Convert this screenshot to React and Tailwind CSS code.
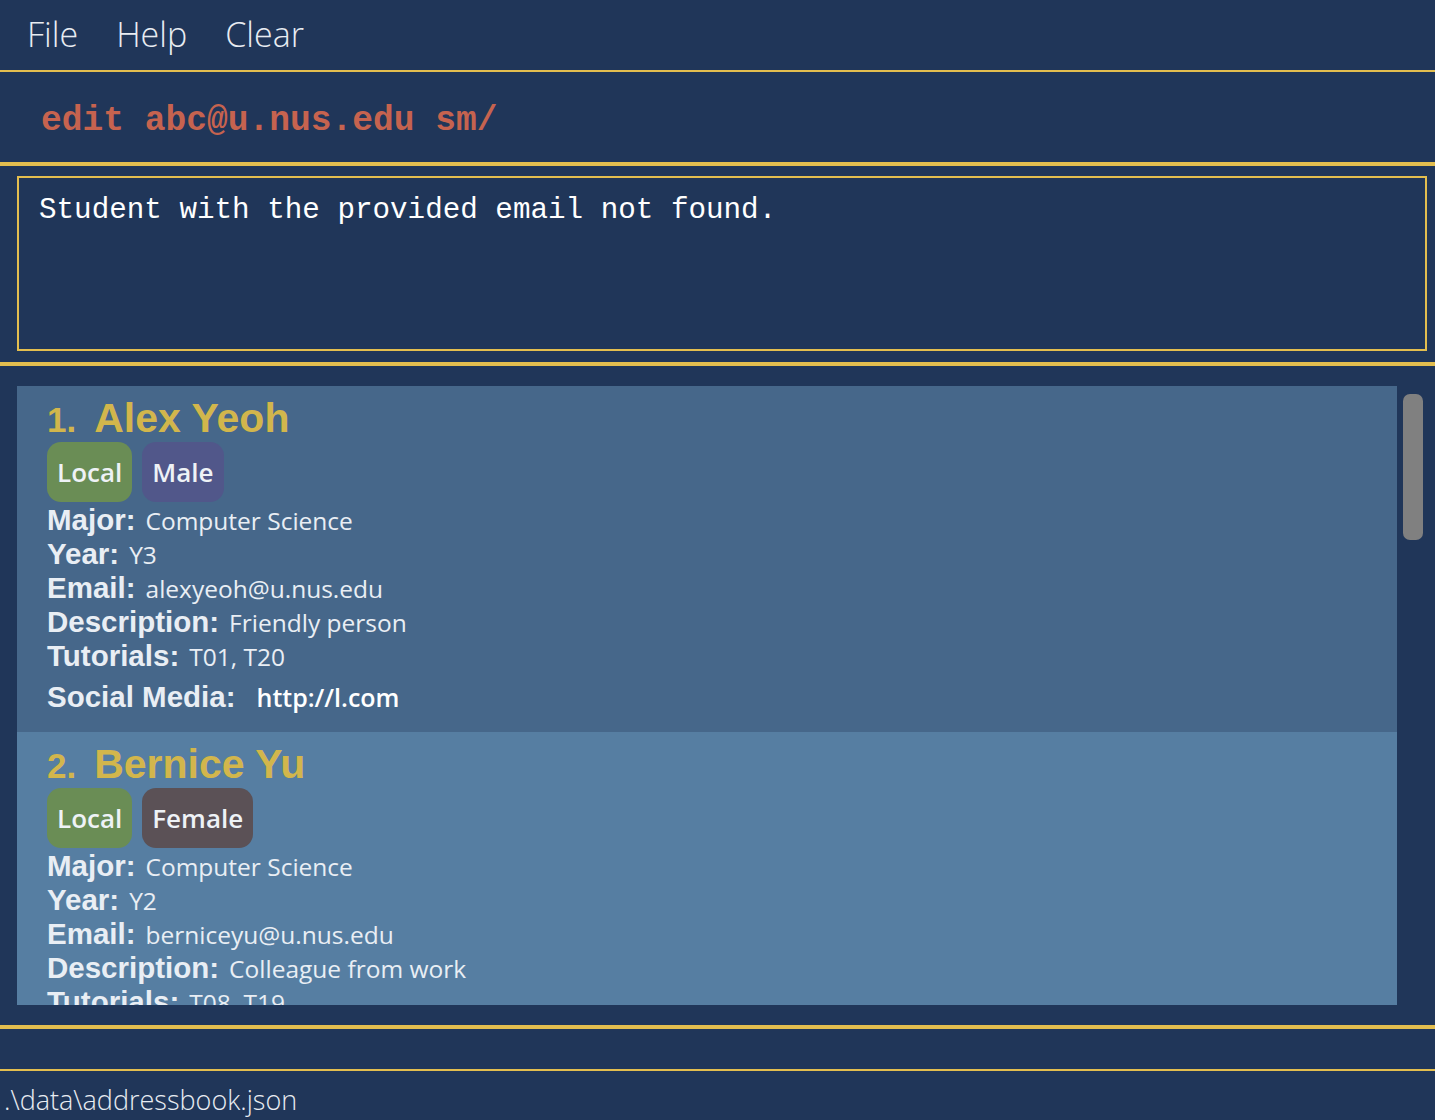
import React from "react";

const sans = { fontFamily: '"Open Sans", "Noto Sans", sans-serif' };
const arial = { fontFamily: '"Liberation Sans", Arial, sans-serif' };
const mono = { fontFamily: '"Liberation Mono", "Courier New", monospace' };

function Tag({ children, color }) {
  return (
    <span
      className={`flex h-[60px] items-center rounded-[14px] px-[10px] text-[26px] font-semibold text-[#eef2f6] ${color}`}
      style={sans}
    >
      {children}
    </span>
  );
}

function Field({ label, value }) {
  return (
    <div className="flex h-[34px] items-baseline leading-none">
      <span className="text-[29.5px] font-bold text-[#e9eef4]" style={arial}>
        {label}
      </span>
      <span className="ml-[10px] text-[24.5px] text-[#e9eef4]" style={sans}>
        {value}
      </span>
    </div>
  );
}

function Card({ idx, name, tags, fields, social, bg }) {
  return (
    <div className={`${bg} h-[346px] shrink-0 overflow-hidden pl-[30px] pt-[12px]`}>
      <div className="flex h-[44px] items-baseline leading-none text-[#d2b64c]" style={arial}>
        <span className="text-[35px] font-bold">{idx}.</span>
        <span className="ml-[18px] text-[41px] font-bold">{name}</span>
      </div>
      <div className="flex gap-[10px]">
        {tags.map((t) => (
          <Tag key={t.label} color={t.color}>
            {t.label}
          </Tag>
        ))}
      </div>
      <div className="mt-[3px] flex flex-col">
        {fields.map((f) => (
          <Field key={f[0]} label={f[0]} value={f[1]} />
        ))}
        {social && (
          <div className="mt-[7px] flex h-[34px] items-baseline leading-none">
            <span className="text-[29.5px] font-bold text-[#e9eef4]" style={arial}>
              Social Media:
            </span>
            <span className="ml-[21px] text-[25px] font-semibold text-white" style={sans}>
              {social}
            </span>
          </div>
        )}
      </div>
    </div>
  );
}

export default function App() {
  return (
    <div className="flex h-[1120px] w-[1435px] flex-col overflow-hidden bg-[#203659]">
      {/* Menu */}
      <div className="flex h-[70px] items-center gap-[38px] pl-[27px] pb-[2px] text-[34px] font-light text-[#e8ecf2]" style={sans}>
        <span>File</span>
        <span>Help</span>
        <span>Clear</span>
      </div>
      <div className="h-[2px] bg-[#e3be4f]" />
      {/* Command box */}
      <div className="flex h-[90px] items-center pl-[41px] pt-[8px]">
        <span className="text-[34.6px] font-bold text-[#c6634f]" style={mono}>
          edit abc@u.nus.edu sm/
        </span>
      </div>
      <div className="h-[4px] bg-[#e3be4f]" />
      {/* Result */}
      <div className="h-[196px] pl-[17px] pr-[8px] pt-[10px] pb-[11px]">
        <div className="h-full border-2 border-[#e3be4f] px-[20px] pt-[11px]">
          <span className="text-[29.25px] text-white" style={mono}>
            Student with the provided email not found.
          </span>
        </div>
      </div>
      <div className="h-[4px] bg-[#e3be4f]" />
      {/* List */}
      <div className="flex h-[659px] pt-[20px] pb-[20px] pl-[17px]">
        <div className="flex w-[1380px] flex-col overflow-hidden">
          <Card
            idx={1}
            name="Alex Yeoh"
            bg="bg-[#46678a]"
            tags={[
              { label: "Local", color: "bg-[#6a8d55]" },
              { label: "Male", color: "bg-[#51578a]" },
            ]}
            fields={[
              ["Major:", "Computer Science"],
              ["Year:", "Y3"],
              ["Email:", "alexyeoh@u.nus.edu"],
              ["Description:", "Friendly person"],
              ["Tutorials:", "T01, T20"],
            ]}
            social="http://l.com"
          />
          <Card
            idx={2}
            name="Bernice Yu"
            bg="bg-[#567ea2]"
            tags={[
              { label: "Local", color: "bg-[#6a8d55]" },
              { label: "Female", color: "bg-[#5b5156]" },
            ]}
            fields={[
              ["Major:", "Computer Science"],
              ["Year:", "Y2"],
              ["Email:", "berniceyu@u.nus.edu"],
              ["Description:", "Colleague from work"],
              ["Tutorials:", "T08, T19"],
            ]}
          />
        </div>
        <div className="ml-[6px] pt-[8px]">
          <div className="h-[146px] w-[20px] rounded-[7px] bg-[#808080]" />
        </div>
      </div>
      <div className="h-[4px] bg-[#e3be4f]" />
      <div className="h-[40px]" />
      <div className="h-[2px] bg-[#e3be4f]" />
      <div className="pl-[4px] pt-[15px] text-[27px] font-light leading-none text-[#e8ecf2]" style={sans}>
        .\data\addressbook.json
      </div>
    </div>
  );
}
